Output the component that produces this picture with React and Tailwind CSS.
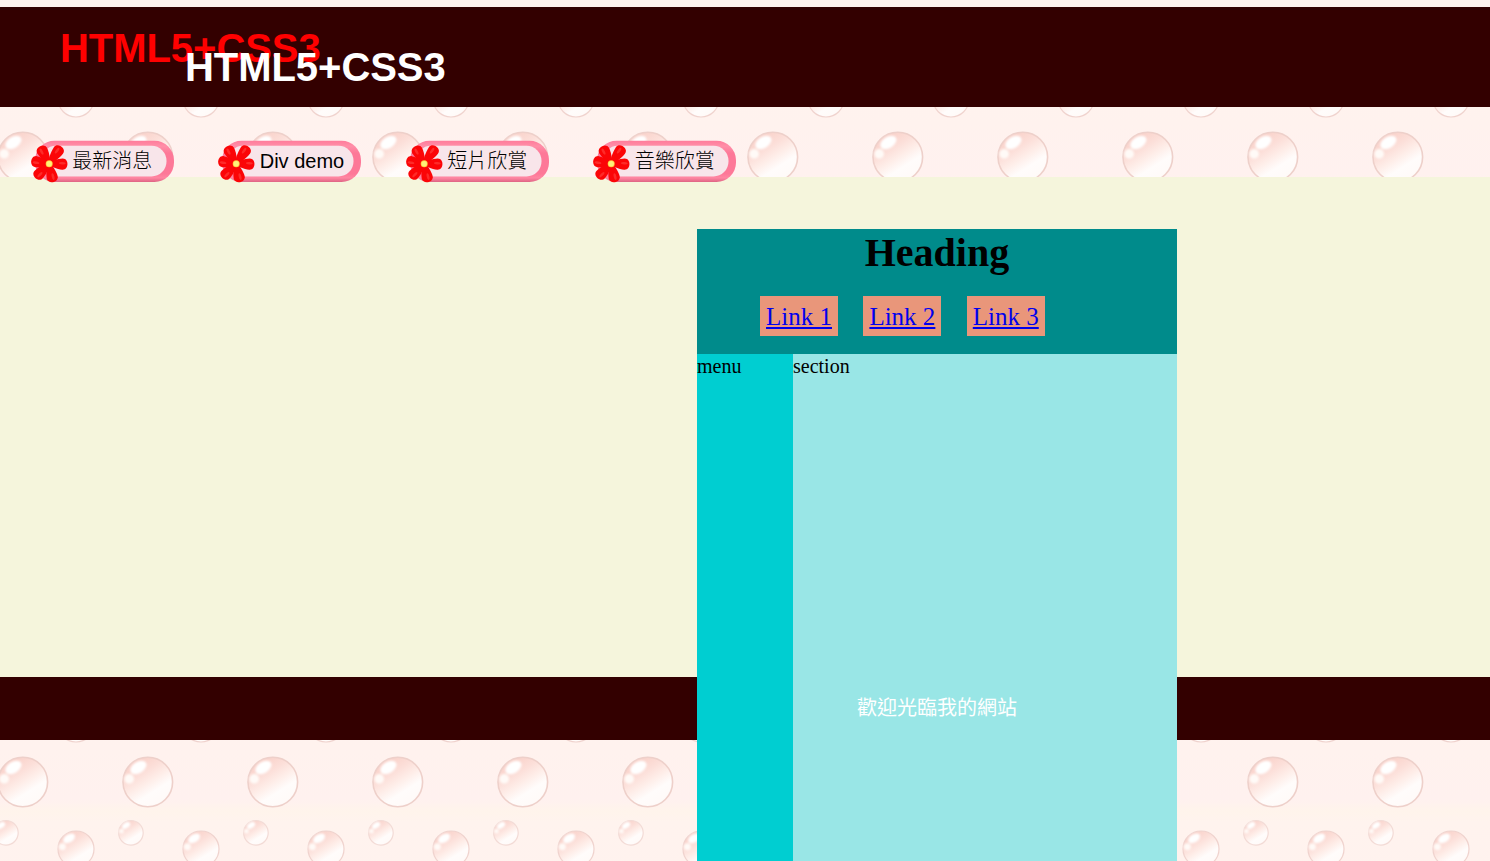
import React from 'react';

const navItems = ['最新消息', 'Div demo', '短片欣賞', '音樂欣賞'];
const links = ['Link 1', 'Link 2', 'Link 3'];

// Petals in badge coordinates: angle in degrees (0 = right) and length.
const petals = [
  { a: -118, l: 19.5 },
  { a: -54, l: 21 },
  { a: 188, l: 18 },
  { a: 133, l: 20 },
  { a: 3, l: 18.5 },
  { a: 77, l: 19 },
];

function Bubble({ cx, cy, r, edge }) {
  return (
    <g>
      <circle cx={cx} cy={cy} r={r - 0.7} fill="url(#bubbleFill)" stroke={edge} strokeWidth={r > 20 ? 1.6 : 1.2} />
      <g filter="url(#soft)">
        <ellipse
          cx={cx - r * 0.37}
          cy={cy - r * 0.57}
          rx={r * 0.35}
          ry={r * 0.22}
          transform={`rotate(-33 ${cx - r * 0.37} ${cy - r * 0.57})`}
          fill="#fff"
        />
        <circle cx={cx - r * 0.73} cy={cy - r * 0.12} r={r * 0.19} fill="#fffaf7" />
      </g>
    </g>
  );
}

function BubbleBackground() {
  return (
    <svg className="absolute inset-0 h-full w-full" aria-hidden="true">
      <defs>
        <linearGradient id="bubbleFill" x1="0.2" y1="0.08" x2="0.75" y2="0.95">
          <stop offset="0" stopColor="#f9d0c8" />
          <stop offset="0.3" stopColor="#fcdfd9" />
          <stop offset="0.5" stopColor="#feede8" />
          <stop offset="0.72" stopColor="#fffcfb" />
          <stop offset="1" stopColor="#fffaf8" />
        </linearGradient>
        <linearGradient id="tileFill" x1="0" y1="0" x2="0" y2="1">
          <stop offset="0" stopColor="#fff2ee" />
          <stop offset="0.4" stopColor="#fff1ef" />
          <stop offset="0.49" stopColor="#fff4eb" />
          <stop offset="0.58" stopColor="#fff3ee" />
          <stop offset="1" stopColor="#fff2ee" />
        </linearGradient>
        <filter id="soft" x="-30%" y="-30%" width="160%" height="160%">
          <feGaussianBlur stdDeviation="0.9" />
        </filter>
        <pattern id="bubbles" width="125" height="125" patternUnits="userSpaceOnUse">
          <rect width="125" height="125" fill="url(#tileFill)" />
          <Bubble cx={22.8} cy={32} r={25.5} edge="#eed0ca" />
          <Bubble cx={147.8} cy={32} r={25.5} edge="#eed0ca" />
          <Bubble cx={76} cy={99} r={18.7} edge="#f0d3ce" />
          <Bubble cx={5.9} cy={82.8} r={13} edge="#f3dbd6" />
          <Bubble cx={130.9} cy={82.8} r={13} edge="#f3dbd6" />
        </pattern>
      </defs>
      <rect width="100%" height="100%" fill="url(#bubbles)" />
    </svg>
  );
}

function FlowerBadge() {
  return (
    <svg className="absolute inset-0" width="144" height="43" viewBox="0 0 144 43" aria-hidden="true">
      <defs>
        <linearGradient id="rim" x1="0" y1="0" x2="0" y2="1">
          <stop offset="0" stopColor="#ff7b9b" />
          <stop offset="0.13" stopColor="#ff8fa8" />
          <stop offset="0.3" stopColor="#fd7898" />
          <stop offset="0.8" stopColor="#fd7898" />
          <stop offset="0.9" stopColor="#ff86a2" />
          <stop offset="1" stopColor="#de6484" />
        </linearGradient>
        <filter id="innerSoft" x="-10%" y="-20%" width="120%" height="140%">
          <feGaussianBlur stdDeviation="0.7" />
        </filter>
      </defs>
      <rect x="4" y="0.8" width="139" height="41.2" rx="19.5" fill="url(#rim)" />
      <rect x="10" y="5.8" width="125.5" height="30.7" rx="15" fill="#f8e5ea" filter="url(#innerSoft)" />
      {petals.map(({ a, l }) => (
        <g key={a} transform={`translate(18 23.5) rotate(${a})`}>
          <path
            d={`M-1 0 C1 -2.6 ${l * 0.45} -5.2 ${l - 5} -5.6 C${l + 1.6} -5.8 ${l + 1.6} 5.8 ${l - 5} 5.6 C${l * 0.45} 5.2 1 2.6 -1 0Z`}
            fill="#fb0507"
          />
          <ellipse cx={l * 0.72} cy="-1" rx="3.4" ry="1.3" fill="#ff4a46" opacity="0.55" />
        </g>
      ))}
      <circle cx="18.2" cy="23.8" r="3.5" fill="#ffc83c" />
      <circle cx="18.2" cy="23.7" r="2.7" fill="#fff27a" />
    </svg>
  );
}

export default function App() {
  return (
    <div className="relative flex h-screen w-full flex-col overflow-hidden bg-[#fff2ee] font-['Liberation_Sans','Noto_Sans_CJK_TC',sans-serif] text-[20px] text-black">
      <BubbleBackground />

      <div className="relative h-[7px] shrink-0 bg-[#fff2ee]" />
      <header className="relative h-[100px] shrink-0 bg-[#330000] pt-[37px] pl-[185px]">
        <h1 className="text-[40px] leading-[46px] font-bold tracking-[-0.05px] text-white [text-shadow:-125px_-19px_0_#ff0000]">
          HTML5+CSS3
        </h1>
      </header>

      <nav className="relative z-10 flex h-[70px] shrink-0 pt-[33px]">
        {navItems.map((item) => (
          <div key={item} className="w-[187.5px] shrink-0 pl-[30.9px]">
            <a className="relative block h-[43px] w-[144px] pl-[41.3px]">
              <FlowerBadge />
              <span className="relative block leading-[42px] font-light whitespace-nowrap">{item}</span>
            </a>
          </div>
        ))}
      </nav>

      <main className="relative h-[500px] shrink-0 bg-[#f5f5dc]">
        <div className="absolute top-[52px] left-[697px] z-10 flex h-[640px] w-[480px] flex-col font-['Liberation_Serif',serif]">
          <div className="h-[125px] shrink-0 bg-[#008b8b]">
            <h2 className="text-center text-[40px] leading-[48px] font-bold">Heading</h2>
            <div className="mt-[19px] flex gap-[25.4px] pl-[63px]">
              {links.map((link) => (
                <a
                  key={link}
                  className="h-10 w-[78px] bg-[#e9967a] text-center text-[25px] leading-[42px] whitespace-nowrap text-[#0000ee] underline"
                >
                  {link}
                </a>
              ))}
            </div>
          </div>
          <div className="flex grow">
            <div className="w-24 bg-[#00ced1] leading-[24px]">menu</div>
            <div className="grow bg-[#99e6e6] leading-[24px]">section</div>
          </div>
        </div>
      </main>

      <footer className="relative flex h-[63px] shrink-0 items-center bg-[#330000]">
        <span className="relative z-20 pb-[2px] pl-[857px] leading-[58px] text-white">歡迎光臨我的網站</span>
      </footer>
    </div>
  );
}
